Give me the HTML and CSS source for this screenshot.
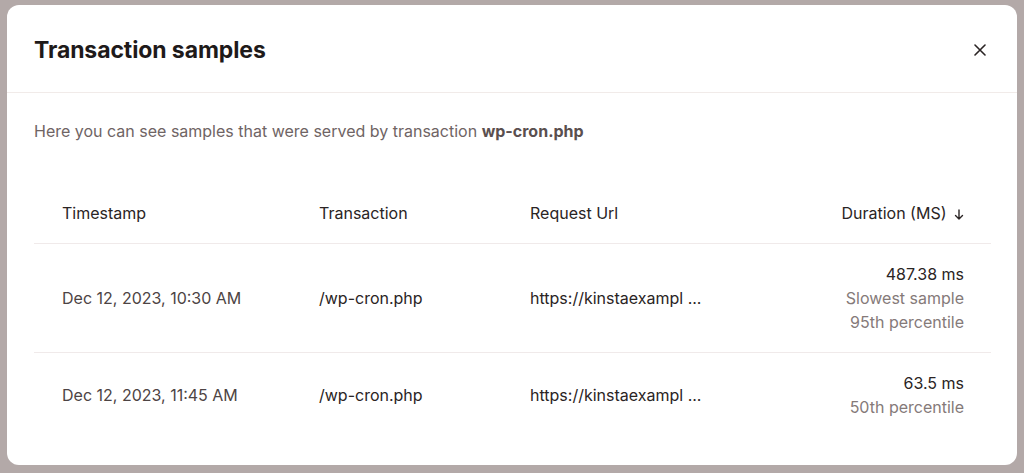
FILE: index.html
```html
<!DOCTYPE html>
<html lang="en">
<head>
<meta charset="utf-8">
<title>Transaction samples</title>
<link rel="stylesheet" href="styles.css">
</head>
<body>
<div class="overlay">
  <div class="modal">
    <div class="modal-header">
      <h2 class="modal-title">Transaction samples</h2>
      <button class="close" aria-label="Close">
        <svg width="12" height="12" viewBox="0 0 12 12"><path d="M1 1L11 11M11 1L1 11" stroke="#2a2424" stroke-width="1.6" stroke-linecap="round"/></svg>
      </button>
    </div>
    <div class="modal-body">
      <p class="desc">Here you can see samples that were served by transaction <strong>wp-cron.php</strong></p>
      <table class="samples">
        <thead>
          <tr>
            <th class="c-time">Timestamp</th>
            <th class="c-trans">Transaction</th>
            <th class="c-url">Request Url</th>
            <th class="c-dur">Duration (MS) <svg class="arrow" width="10" height="11" viewBox="0 0 10 11"><path d="M5 1V10M1.5 6.5L5 10L8.5 6.5" fill="none" stroke="#2a2424" stroke-width="1.4" stroke-linecap="round" stroke-linejoin="round"/></svg></th>
          </tr>
        </thead>
        <tbody>
          <tr>
            <td class="c-time">Dec 12, 2023, 10:30 AM</td>
            <td class="c-trans">/wp-cron.php</td>
            <td class="c-url">https://kinstaexampl ...</td>
            <td class="c-dur"><div class="val">487.38 ms</div><div class="sub">Slowest sample</div><div class="sub">95th percentile</div></td>
          </tr>
          <tr>
            <td class="c-time">Dec 12, 2023, 11:45 AM</td>
            <td class="c-trans">/wp-cron.php</td>
            <td class="c-url">https://kinstaexampl ...</td>
            <td class="c-dur"><div class="val">63.5 ms</div><div class="sub">50th percentile</div></td>
          </tr>
        </tbody>
      </table>
    </div>
  </div>
</div>
</body>
</html>
```

FILE: styles.css
```css
* { box-sizing: border-box; }
html, body { margin: 0; padding: 0; }
body {
  width: 1024px;
  height: 473px;
  overflow: hidden;
  background: #b3a9a8;
  font-family: Inter, "Noto Sans", sans-serif;
}
.overlay {
  padding: 5px 7px;
}
.modal {
  width: 1010px;
  height: 460px;
  background: #fff;
  border-radius: 12px;
  overflow: hidden;
}
.modal-header {
  height: 88px;
  border-bottom: 1px solid #f1ebe9;
  display: flex;
  align-items: center;
  justify-content: space-between;
  padding: 3px 31px 0 27px;
}
.modal-title {
  margin: 0;
  font-size: 23px;
  font-weight: 700;
  color: #1e1a1a;
  letter-spacing: -0.1px;
}
.close {
  border: 0;
  background: none;
  padding: 0;
  width: 12px;
  height: 12px;
  display: flex;
  cursor: pointer;
}
.modal-body {
  padding: 26px 27px 0 27px;
}
.desc {
  margin: 0 0 40px 0;
  font-size: 16px;
  line-height: 24px;
  color: #6f6464;
}
.desc strong {
  color: #5a4f4f;
  font-weight: 700;
}
.samples {
  width: 957px;
  border-collapse: collapse;
  font-size: 16px;
  line-height: 24px;
}
.samples th, .samples td {
  padding: 18px 0;
  text-align: left;
  font-weight: 400;
  vertical-align: middle;
}
.samples thead th {
  color: #2a2424;
  border-bottom: 1px solid #f0eaea;
}
.samples tbody tr:first-child td {
  border-bottom: 1px solid #f0eaea;
}
.samples td { color: #2a2424; }
.c-time { padding-left: 28px !important; width: 285px; }
.samples td.c-time { color: #4d4444; }
.c-trans { width: 211px; }
.c-url { width: 220px; }
.c-dur { text-align: right !important; padding-right: 27px !important; }
.arrow { vertical-align: -1px; margin-left: 3px; }
.val { color: #2a2424; }
.sub { color: #857a79; }
```
